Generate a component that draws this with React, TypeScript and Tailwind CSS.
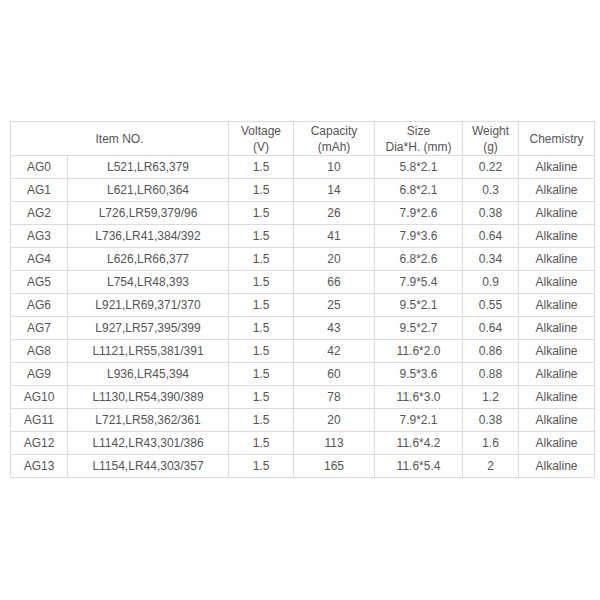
const ROWS: [string, string, string, string, string, string][] = [
  ['AG0', 'L521,LR63,379', '10', '5.8*2.1', '0.22', 'Alkaline'],
  ['AG1', 'L621,LR60,364', '14', '6.8*2.1', '0.3', 'Alkaline'],
  ['AG2', 'L726,LR59,379/96', '26', '7.9*2.6', '0.38', 'Alkaline'],
  ['AG3', 'L736,LR41,384/392', '41', '7.9*3.6', '0.64', 'Alkaline'],
  ['AG4', 'L626,LR66,377', '20', '6.8*2.6', '0.34', 'Alkaline'],
  ['AG5', 'L754,LR48,393', '66', '7.9*5.4', '0.9', 'Alkaline'],
  ['AG6', 'L921,LR69,371/370', '25', '9.5*2.1', '0.55', 'Alkaline'],
  ['AG7', 'L927,LR57,395/399', '43', '9.5*2.7', '0.64', 'Alkaline'],
  ['AG8', 'L1121,LR55,381/391', '42', '11.6*2.0', '0.86', 'Alkaline'],
  ['AG9', 'L936,LR45,394', '60', '9.5*3.6', '0.88', 'Alkaline'],
  ['AG10', 'L1130,LR54,390/389', '78', '11.6*3.0', '1.2', 'Alkaline'],
  ['AG11', 'L721,LR58,362/361', '20', '7.9*2.1', '0.38', 'Alkaline'],
  ['AG12', 'L1142,LR43,301/386', '113', '11.6*4.2', '1.6', 'Alkaline'],
  ['AG13', 'L1154,LR44,303/357', '165', '11.6*5.4', '2', 'Alkaline'],
];

const cell = 'border border-[#dcdcdc] text-center align-middle p-0';

export default function App() {
  return (
    <div className="w-[600px] h-[600px] bg-white pt-[121px] pl-[10px] font-['Liberation_Sans',Arial,sans-serif] text-[12px] text-[#555]">
      <table className="border-collapse table-fixed w-[584px]">
        <colgroup>
          <col className="w-[57px]" />
          <col className="w-[161px]" />
          <col className="w-[65px]" />
          <col className="w-[81px]" />
          <col className="w-[88px]" />
          <col className="w-[56px]" />
          <col className="w-[76px]" />
        </colgroup>
        <thead>
          <tr className="h-[34px] leading-[16px]">
            <th colSpan={2} className={`${cell} font-normal`}>Item NO.</th>
            <th className={`${cell} font-normal`}>Voltage<br />(V)</th>
            <th className={`${cell} font-normal`}>Capacity<br />(mAh)</th>
            <th className={`${cell} font-normal`}>Size<br />Dia*H. (mm)</th>
            <th className={`${cell} font-normal`}>Weight<br />(g)</th>
            <th className={`${cell} font-normal`}>Chemistry</th>
          </tr>
        </thead>
        <tbody>
          {ROWS.map((r) => (
            <tr key={r[0]} className="h-[23px]">
              <td className={cell}>{r[0]}</td>
              <td className={cell}>{r[1]}</td>
              <td className={cell}>1.5</td>
              <td className={cell}>{r[2]}</td>
              <td className={cell}>{r[3]}</td>
              <td className={cell}>{r[4]}</td>
              <td className={cell}>{r[5]}</td>
            </tr>
          ))}
        </tbody>
      </table>
    </div>
  );
}
